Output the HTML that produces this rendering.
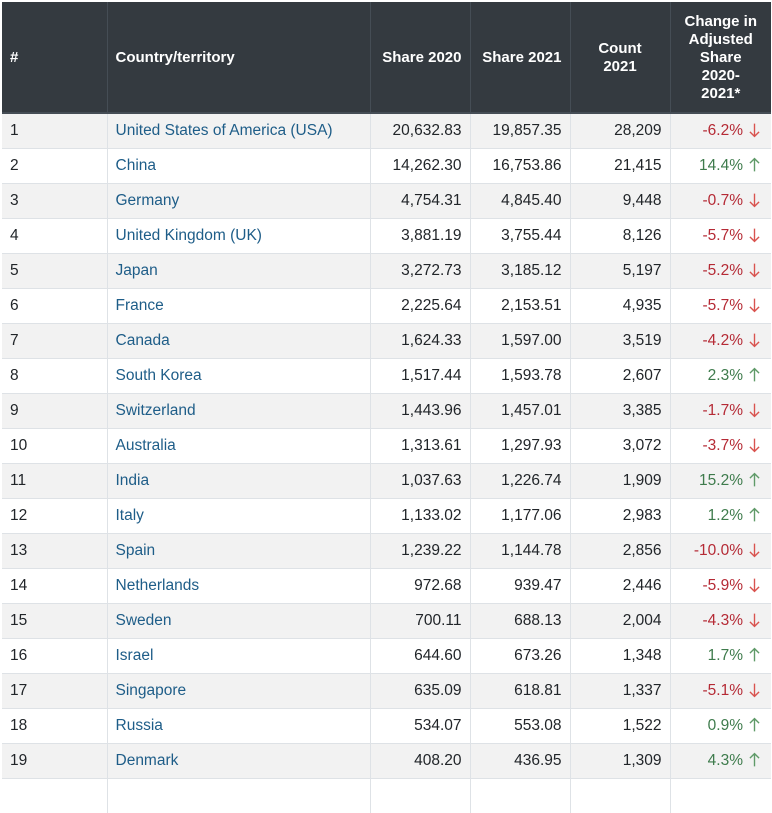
<!DOCTYPE html>
<html><head><meta charset="utf-8"><style>
body{margin:0;background:#fff;font-family:"Liberation Sans",sans-serif;}
table{position:absolute;left:2px;top:2px;border-collapse:collapse;table-layout:fixed;width:769px;font-size:15.5px;color:#212529}
th{background:#343a40;color:#fff;font-weight:bold;font-size:15px;height:108px;border-left:1px solid #454d55;border-bottom:2px solid #454d55;line-height:18px;padding:2px 8px 0;}
th:first-child{border-left:none}
td{height:34px;border-top:1px solid #dee2e6;border-left:1px solid #dee2e6;padding:0 8px;white-space:nowrap}
td:first-child{border-left:none}
tr:nth-child(odd) td{background:#f2f2f2}
.l{text-align:left}.r{text-align:right}.c{text-align:center}
a{color:#1e5d88;text-decoration:none}
.dn{color:#b52a35}.up{color:#3e7b4c}
td:last-child{padding-right:11px}
svg{vertical-align:-3px;margin-left:6px}
</style></head><body>
<svg width="0" height="0" style="position:absolute"><defs>
<symbol id="d" viewBox="0 0 12 16"><path d="M6 1V15M1 10L6 15L11 10" fill="none" stroke="#d9534f" stroke-width="1.5"/></symbol>
<symbol id="u" viewBox="0 0 12 16"><path d="M6 15V1M1 6L6 1L11 6" fill="none" stroke="#5f9a68" stroke-width="1.5"/></symbol>
</defs></svg>
<table>
<colgroup><col style="width:105px"><col style="width:263px"><col style="width:100px"><col style="width:100px"><col style="width:100px"><col style="width:101px"></colgroup>
<thead><tr><th class="l">#</th><th class="l">Country/territory</th><th class="r">Share 2020</th><th class="r">Share 2021</th><th class="c">Count<br>2021</th><th class="c">Change in<br>Adjusted<br>Share<br>2020-<br>2021*</th></tr></thead>
<tbody>
<tr><td>1</td><td><a>United States of America (USA)</a></td><td class="r">20,632.83</td><td class="r">19,857.35</td><td class="r">28,209</td><td class="r dn">-6.2%<svg width="11" height="16"><use href="#d"/></svg></td></tr>
<tr><td>2</td><td><a>China</a></td><td class="r">14,262.30</td><td class="r">16,753.86</td><td class="r">21,415</td><td class="r up">14.4%<svg width="11" height="16"><use href="#u"/></svg></td></tr>
<tr><td>3</td><td><a>Germany</a></td><td class="r">4,754.31</td><td class="r">4,845.40</td><td class="r">9,448</td><td class="r dn">-0.7%<svg width="11" height="16"><use href="#d"/></svg></td></tr>
<tr><td>4</td><td><a>United Kingdom (UK)</a></td><td class="r">3,881.19</td><td class="r">3,755.44</td><td class="r">8,126</td><td class="r dn">-5.7%<svg width="11" height="16"><use href="#d"/></svg></td></tr>
<tr><td>5</td><td><a>Japan</a></td><td class="r">3,272.73</td><td class="r">3,185.12</td><td class="r">5,197</td><td class="r dn">-5.2%<svg width="11" height="16"><use href="#d"/></svg></td></tr>
<tr><td>6</td><td><a>France</a></td><td class="r">2,225.64</td><td class="r">2,153.51</td><td class="r">4,935</td><td class="r dn">-5.7%<svg width="11" height="16"><use href="#d"/></svg></td></tr>
<tr><td>7</td><td><a>Canada</a></td><td class="r">1,624.33</td><td class="r">1,597.00</td><td class="r">3,519</td><td class="r dn">-4.2%<svg width="11" height="16"><use href="#d"/></svg></td></tr>
<tr><td>8</td><td><a>South Korea</a></td><td class="r">1,517.44</td><td class="r">1,593.78</td><td class="r">2,607</td><td class="r up">2.3%<svg width="11" height="16"><use href="#u"/></svg></td></tr>
<tr><td>9</td><td><a>Switzerland</a></td><td class="r">1,443.96</td><td class="r">1,457.01</td><td class="r">3,385</td><td class="r dn">-1.7%<svg width="11" height="16"><use href="#d"/></svg></td></tr>
<tr><td>10</td><td><a>Australia</a></td><td class="r">1,313.61</td><td class="r">1,297.93</td><td class="r">3,072</td><td class="r dn">-3.7%<svg width="11" height="16"><use href="#d"/></svg></td></tr>
<tr><td>11</td><td><a>India</a></td><td class="r">1,037.63</td><td class="r">1,226.74</td><td class="r">1,909</td><td class="r up">15.2%<svg width="11" height="16"><use href="#u"/></svg></td></tr>
<tr><td>12</td><td><a>Italy</a></td><td class="r">1,133.02</td><td class="r">1,177.06</td><td class="r">2,983</td><td class="r up">1.2%<svg width="11" height="16"><use href="#u"/></svg></td></tr>
<tr><td>13</td><td><a>Spain</a></td><td class="r">1,239.22</td><td class="r">1,144.78</td><td class="r">2,856</td><td class="r dn">-10.0%<svg width="11" height="16"><use href="#d"/></svg></td></tr>
<tr><td>14</td><td><a>Netherlands</a></td><td class="r">972.68</td><td class="r">939.47</td><td class="r">2,446</td><td class="r dn">-5.9%<svg width="11" height="16"><use href="#d"/></svg></td></tr>
<tr><td>15</td><td><a>Sweden</a></td><td class="r">700.11</td><td class="r">688.13</td><td class="r">2,004</td><td class="r dn">-4.3%<svg width="11" height="16"><use href="#d"/></svg></td></tr>
<tr><td>16</td><td><a>Israel</a></td><td class="r">644.60</td><td class="r">673.26</td><td class="r">1,348</td><td class="r up">1.7%<svg width="11" height="16"><use href="#u"/></svg></td></tr>
<tr><td>17</td><td><a>Singapore</a></td><td class="r">635.09</td><td class="r">618.81</td><td class="r">1,337</td><td class="r dn">-5.1%<svg width="11" height="16"><use href="#d"/></svg></td></tr>
<tr><td>18</td><td><a>Russia</a></td><td class="r">534.07</td><td class="r">553.08</td><td class="r">1,522</td><td class="r up">0.9%<svg width="11" height="16"><use href="#u"/></svg></td></tr>
<tr><td>19</td><td><a>Denmark</a></td><td class="r">408.20</td><td class="r">436.95</td><td class="r">1,309</td><td class="r up">4.3%<svg width="11" height="16"><use href="#u"/></svg></td></tr>
<tr><td></td><td></td><td></td><td></td><td></td><td></td></tr>
</tbody></table>
</body></html>
